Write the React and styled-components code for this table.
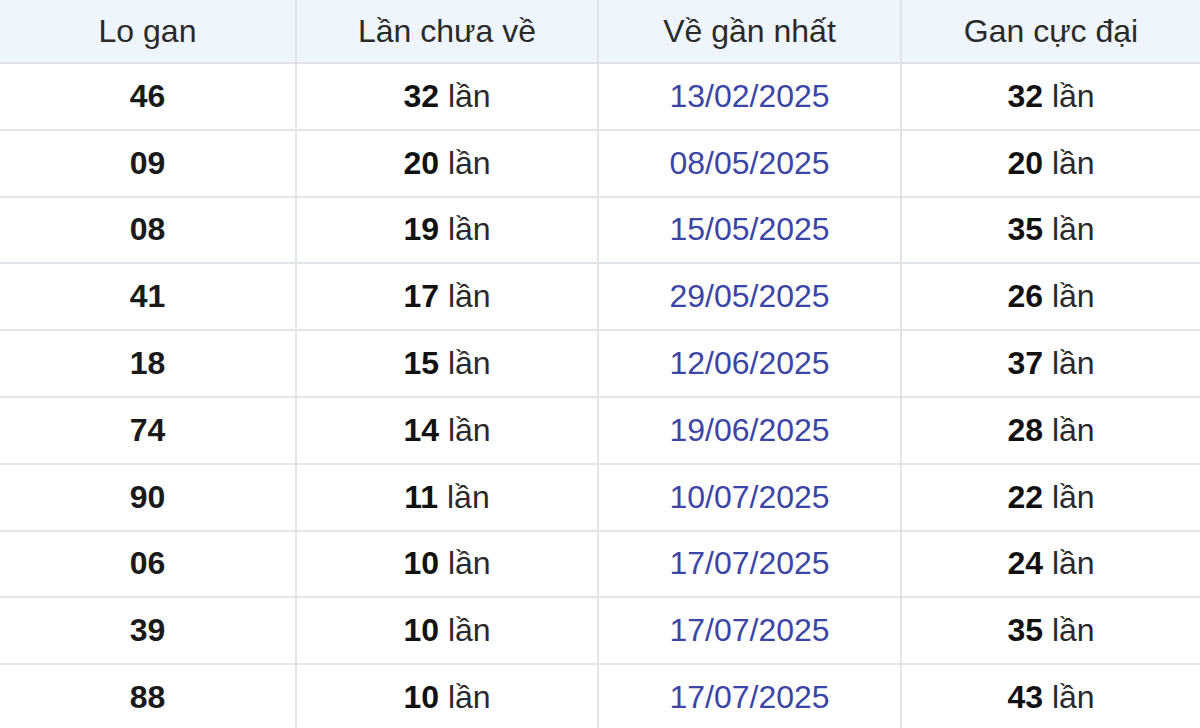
import React from "react";
import styled, { createGlobalStyle } from "styled-components";

const Global = createGlobalStyle`
  html, body { margin: 0; padding: 0; background: #fff; }
  body { font-family: "Liberation Sans", Arial, sans-serif; overflow: hidden; }
`;

const Table = styled.table`
  width: 1202px;
  border-collapse: collapse;
  table-layout: fixed;
  font-family: "Liberation Sans", Arial, sans-serif;
  font-size: 32px;
  color: #1a1a1a;
`;

const Head = styled.th`
  height: 62px;
  padding: 0;
  background: #eef5fc;
  font-weight: 400;
  color: #2a2a2a;
  text-align: center;
  border: 2px solid #dfe3e8;
  border-top: none;
  &:first-child { border-left: none; }
`;

const Cell = styled.td`
  height: 64.8px;
  padding: 0;
  text-align: center;
  border: 2px solid #e1e4e8;
  &:first-child { border-left: none; }
  color: ${(p) => (p.$date ? "#3b45a6" : "#1a1a1a")};
  font-weight: ${(p) => (p.$bold ? 700 : 400)};
`;

const Num = styled.b`
  font-weight: 700;
  color: #111;
`;

const Unit = styled.span`
  color: #2a2a2a;
`;

const rows = [
  ["46", "32", "13/02/2025", "32"],
  ["09", "20", "08/05/2025", "20"],
  ["08", "19", "15/05/2025", "35"],
  ["41", "17", "29/05/2025", "26"],
  ["18", "15", "12/06/2025", "37"],
  ["74", "14", "19/06/2025", "28"],
  ["90", "11", "10/07/2025", "22"],
  ["06", "10", "17/07/2025", "24"],
  ["39", "10", "17/07/2025", "35"],
  ["88", "10", "17/07/2025", "43"],
];

const Count = ({ n }) => (
  <>
    <Num>{n}</Num> <Unit>lần</Unit>
  </>
);

export default function App() {
  return (
    <>
      <Global />
      <Table>
        <colgroup>
          <col style={{ width: 296 }} />
          <col style={{ width: 302 }} />
          <col style={{ width: 303 }} />
          <col />
        </colgroup>
        <thead>
          <tr>
            <Head>Lo gan</Head>
            <Head>Lần chưa về</Head>
            <Head>Về gần nhất</Head>
            <Head>Gan cực đại</Head>
          </tr>
        </thead>
        <tbody>
          {rows.map((r, i) => (
            <tr key={i}>
              <Cell $bold>{r[0]}</Cell>
              <Cell><Count n={r[1]} /></Cell>
              <Cell $date>{r[2]}</Cell>
              <Cell><Count n={r[3]} /></Cell>
            </tr>
          ))}
        </tbody>
      </Table>
    </>
  );
}
